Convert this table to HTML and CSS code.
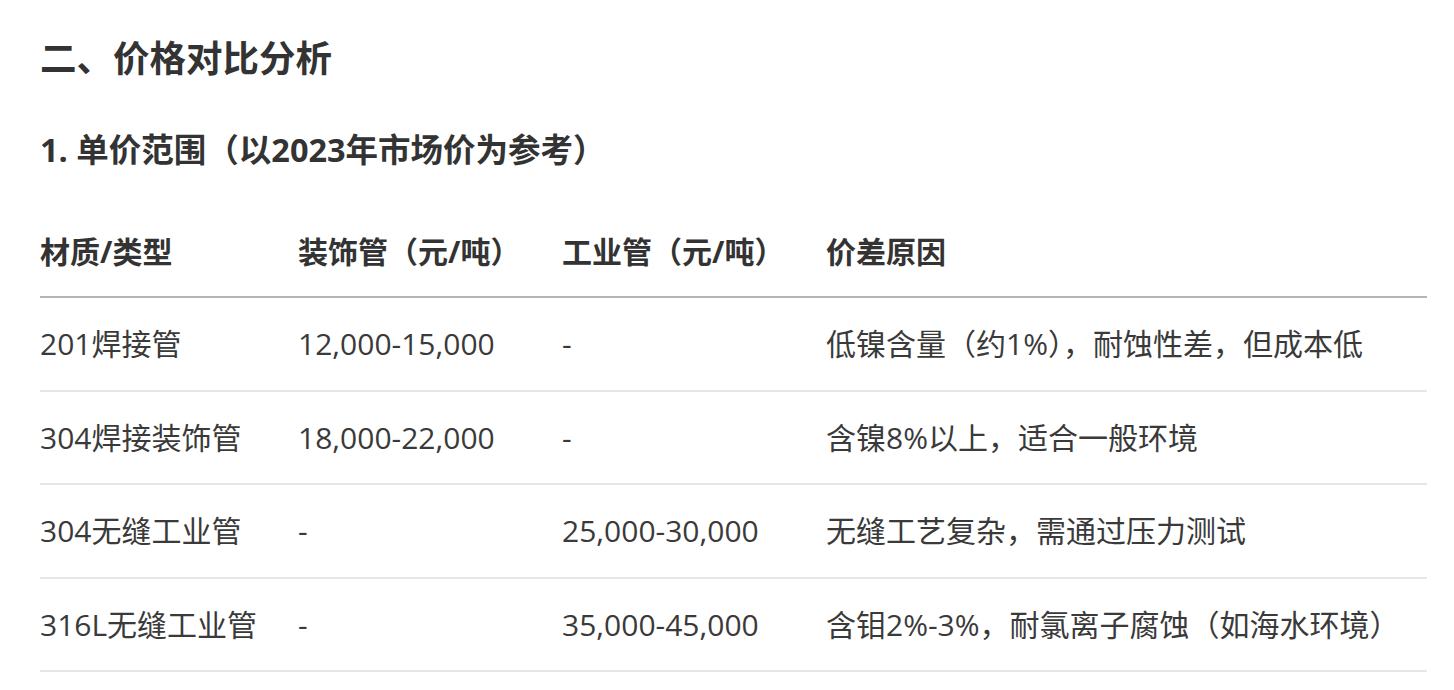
FILE: index.html
```html
<!DOCTYPE html>
<html lang="zh-CN">
<head>
<meta charset="utf-8">
<title>价格对比分析</title>
<link rel="stylesheet" href="styles.css">
</head>
<body>
<main class="doc">
  <h2 class="sec-title">二、价格对比分析</h2>
  <h3 class="sub-title">1. 单价范围（以2023年市场价为参考）</h3>
  <table class="price-table">
    <colgroup>
      <col class="c1"><col class="c2"><col class="c3"><col class="c4">
    </colgroup>
    <thead>
      <tr><th>材质/类型</th><th>装饰管（元/吨）</th><th>工业管（元/吨）</th><th>价差原因</th></tr>
    </thead>
    <tbody>
      <tr><td>201焊接管</td><td>12,000-15,000</td><td>-</td><td>低镍含量（约1%），耐蚀性差，但成本低</td></tr>
      <tr><td>304焊接装饰管</td><td>18,000-22,000</td><td>-</td><td>含镍8%以上，适合一般环境</td></tr>
      <tr><td>304无缝工业管</td><td>-</td><td>25,000-30,000</td><td>无缝工艺复杂，需通过压力测试</td></tr>
      <tr><td>316L无缝工业管</td><td>-</td><td>35,000-45,000</td><td>含钼2%-3%，耐氯离子腐蚀（如海水环境）</td></tr>
    </tbody>
  </table>
</main>
</body>
</html>
```

FILE: styles.css
```css
html, body {
  margin: 0;
  padding: 0;
  background: #ffffff;
}
body {
  font-family: "Open Sans", "Noto Sans CJK SC", sans-serif;
  color: #333333;
}
.doc {
  padding: 33px 27px 0 40px;
}
.sec-title {
  margin: 0;
  font-size: 36.5px;
  line-height: 50px;
  font-weight: 700;
}
.sub-title {
  margin: 44px 0 0;
  font-size: 32.5px;
  line-height: 46px;
  font-weight: 700;
}
.price-table {
  margin-top: 34px;
  border-collapse: collapse;
  width: 1387px;
  table-layout: fixed;
  font-size: 30px;
}
.price-table .c1 { width: 258px; }
.price-table .c2 { width: 264px; }
.price-table .c3 { width: 264px; }
.price-table th,
.price-table td {
  text-align: left;
  padding: 0;
  white-space: nowrap;
  line-height: 45px;
}
.price-table th {
  font-weight: 700;
  padding: 22px 0;
  border-bottom: 2px solid #b5b5b5;
}
.price-table td {
  padding: 23.25px 0;
  border-bottom: 2px solid #e6e6e6;
  color: #3a3a3a;
}
```
